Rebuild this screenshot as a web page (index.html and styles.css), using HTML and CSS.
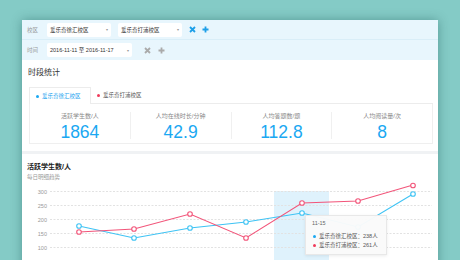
FILE: index.html
```html
<!DOCTYPE html>
<html lang="zh-CN">
<head>
  <meta charset="UTF-8">
  <title>时段统计</title>
  <link rel="stylesheet" href="styles.css">
</head>
<body>

<div class="panel">

  <!-- filters -->
  <div class="filter-bar">
    <div class="filter-row first">
      <span class="filter-label">校区</span>
      <div class="select">爱乐奇徐汇校区<span class="caret">▾</span></div>
      <div class="select">爱乐奇打浦校区<span class="caret">▾</span></div>
      <svg class="icon blue" width="7" height="7" viewBox="0 0 7 7"><path d="M1 1L6 6M6 1L1 6"/></svg>
      <svg class="icon blue" width="7" height="7" viewBox="0 0 7 7"><path d="M3.5 0.5V6.5M0.5 3.5H6.5"/></svg>
    </div>
    <div class="filter-row">
      <span class="filter-label">时间</span>
      <div class="select wide">2016-11-11 至 2016-11-17<span class="caret">▾</span></div>
      <svg class="icon gray" width="7" height="7" viewBox="0 0 7 7"><path d="M1 1L6 6M6 1L1 6"/></svg>
      <svg class="icon gray" width="7" height="7" viewBox="0 0 7 7"><path d="M3.5 0.5V6.5M0.5 3.5H6.5"/></svg>
    </div>
  </div>

  <!-- summary -->
  <div class="card summary">
    <h2 class="card-title">时段统计</h2>
    <div class="tabs">
      <div class="tab active"><span class="dot blue-dot"></span>爱乐奇徐汇校区</div>
      <div class="tab"><span class="dot red-dot"></span>爱乐奇打浦校区</div>
    </div>
    <div class="stats">
      <div class="stat">
        <div class="stat-label">活跃学生数/人</div>
        <div class="stat-value">1864</div>
      </div>
      <div class="stat">
        <div class="stat-label">人均在线时长/分钟</div>
        <div class="stat-value">42.9</div>
      </div>
      <div class="stat">
        <div class="stat-label">人均答题数/题</div>
        <div class="stat-value">112.8</div>
      </div>
      <div class="stat">
        <div class="stat-label">人均阅读量/次</div>
        <div class="stat-value">8</div>
      </div>
    </div>
  </div>

  <!-- chart -->
  <div class="card chart-card">
    <h3 class="chart-title">活跃学生数/人</h3>
    <div class="chart-sub">每日明细趋势</div>
    <div class="chart">
      <svg width="416" height="78" viewBox="0 0 416 78">
        <rect x="252" y="8" width="55" height="70" fill="#dff2fc"/>
        <g stroke="#e2e2e2" stroke-width="1" stroke-dasharray="2 1.5">
          <line x1="28" y1="8.5" x2="410" y2="8.5"/>
          <line x1="28" y1="22.5" x2="410" y2="22.5"/>
          <line x1="28" y1="36.5" x2="410" y2="36.5"/>
          <line x1="28" y1="50.5" x2="410" y2="50.5"/>
          <line x1="28" y1="64.5" x2="410" y2="64.5"/>
          <line x1="28" y1="78.5" x2="410" y2="78.5"/>
        </g>
        <g class="axis" text-anchor="end">
          <text x="25" y="10.5">300</text>
          <text x="25" y="24.5">250</text>
          <text x="25" y="38.5">200</text>
          <text x="25" y="52.5">150</text>
          <text x="25" y="66.5">100</text>
          <text x="25" y="80.5">50</text>
        </g>
        <polyline class="line-blue" points="57,43 112,55 168,45 224,39 280,30 336,44 391,11"/>
        <polyline class="line-red" points="57,49 112,46 168,31 224,55 280,20 336,18 391,2"/>
        <g class="pts-blue">
          <circle cx="57" cy="43" r="2.3"/><circle cx="112" cy="55" r="2.3"/>
          <circle cx="168" cy="45" r="2.3"/><circle cx="224" cy="39" r="2.3"/>
          <circle cx="280" cy="30" r="2.3"/><circle cx="336" cy="44" r="2.3"/>
          <circle cx="391" cy="11" r="2.3"/>
        </g>
        <g class="pts-red">
          <circle cx="57" cy="49" r="2.3"/><circle cx="112" cy="46" r="2.3"/>
          <circle cx="168" cy="31" r="2.3"/><circle cx="224" cy="55" r="2.3"/>
          <circle cx="280" cy="20" r="2.3"/><circle cx="336" cy="18" r="2.3"/>
          <circle cx="391" cy="2.5" r="2.3"/>
        </g>
      </svg>
      <div class="tooltip">
        <div class="tip-date">11-15</div>
        <div class="tip-row"><span class="dot blue-dot"></span>爱乐奇徐汇校区：238人</div>
        <div class="tip-row"><span class="dot red-dot"></span>爱乐奇打浦校区：261人</div>
      </div>
    </div>
  </div>

</div>

</body>
</html>
```

FILE: styles.css
```css
body {
  font-family: "Liberation Sans", "Noto Sans CJK SC", sans-serif;
  margin: 0;
  padding: 20px 0 0 22px;
  background-color: #84cbc6;
  height: 260px;
  box-sizing: border-box;
  overflow: hidden;
}

.panel {
  width: 416px;
  height: 260px;
  background-color: #f0f2f4;
  box-shadow: 0 0 10px rgba(0, 60, 60, 0.35);
}

/* filter bar */
.filter-bar {
  background-color: #e8f6fd;
}

.filter-row {
  display: flex;
  align-items: center;
  height: 20px;
  padding-left: 5px;
  box-sizing: border-box;
  font-size: 5.5px;
}

.filter-row.first {
  border-bottom: 1px solid #d9eef8;
}

.filter-label {
  width: 20px;
  color: #999;
}

.select {
  display: flex;
  align-items: center;
  justify-content: space-between;
  width: 64px;
  height: 14px;
  padding: 0 3px;
  box-sizing: border-box;
  background-color: #ffffff;
  border-radius: 2px;
  color: #333;
  margin-right: 7px;
}

.select.wide {
  width: 85px;
  margin-right: 12px;
}

.caret {
  color: #999;
  font-size: 4px;
}

.icon {
  margin-right: 6px;
  fill: none;
  stroke-width: 1.8;
}

.icon.blue {
  stroke: #1d9fe8;
}

.icon.gray {
  stroke: #aaaaaa;
  margin-right: 7px;
}

/* cards */
.card {
  background-color: #ffffff;
}

.summary {
  padding: 7px 5px 7px 7px;
  margin-bottom: 3px;
}

.card-title {
  margin: 0 0 8px -1px;
  font-size: 8px;
  line-height: 12px;
  font-weight: normal;
  color: #333;
}

.tabs {
  display: flex;
  height: 16px;
  border-bottom: 1px solid #ececec;
  font-size: 5.5px;
}

.tab {
  display: flex;
  align-items: center;
  padding: 0 6px;
  color: #555;
  height: 16px;
  box-sizing: border-box;
}

.tab.active {
  width: 62px;
  background-color: #ffffff;
  border: 1px solid #ececec;
  border-bottom: none;
  height: 17px;
  margin-bottom: -1px;
  color: #1aa3ef;
}

.dot {
  display: inline-block;
  width: 3px;
  height: 3px;
  border-radius: 50%;
  margin-right: 3px;
}

.blue-dot {
  background-color: #1aa8f2;
}

.red-dot {
  background-color: #f03a5a;
}

.stats {
  display: flex;
  height: 39px;
  border: 1px solid #efefef;
  border-top: none;
}

.stat {
  flex: 1;
  text-align: center;
  margin: 8px 0 4px;
}

.stat + .stat {
  border-left: 1px solid #f0f0f0;
}

.stat-label {
  font-size: 6px;
  line-height: 8px;
  color: #888;
}

.stat-value {
  margin-top: 2px;
  font-size: 17.5px;
  line-height: 20px;
  color: #1aa8f2;
}

/* chart */
.chart-card {
  padding-top: 8px;
  height: 120px;
}

.chart-title {
  margin: 0 0 1px 5px;
  font-size: 7px;
  line-height: 10px;
  color: #222;
}

.chart-sub {
  margin-left: 5px;
  font-size: 5.5px;
  line-height: 8px;
  color: #999;
}

.chart {
  position: relative;
  margin-top: 2px;
}

.chart svg {
  display: block;
  overflow: visible;
}

.axis {
  font-size: 5.5px;
  fill: #999;
}

.line-blue, .line-red {
  fill: none;
  stroke-width: 1.1;
}

.line-blue {
  stroke: #3ec3f4;
}

.line-red {
  stroke: #f2557a;
}

.pts-blue circle {
  fill: #ffffff;
  stroke: #3ec3f4;
  stroke-width: 1.1;
}

.pts-red circle {
  fill: #ffffff;
  stroke: #f2557a;
  stroke-width: 1.1;
}

.tooltip {
  position: absolute;
  left: 283px;
  top: 32px;
  width: 82px;
  height: 40px;
  box-sizing: border-box;
  padding: 4px 6px 0;
  background-color: rgba(250, 250, 250, 0.97);
  border: 1px solid #e8e8e8;
  box-shadow: 0 1px 3px rgba(0, 0, 0, 0.08);
  font-size: 5.5px;
  color: #555;
}

.tip-date {
  line-height: 7px;
  margin-bottom: 5px;
  color: #666;
}

.tip-row {
  display: flex;
  align-items: center;
  line-height: 9px;
}

.tip-row .dot {
  margin-left: 1px;
  margin-right: 3px;
}
```
